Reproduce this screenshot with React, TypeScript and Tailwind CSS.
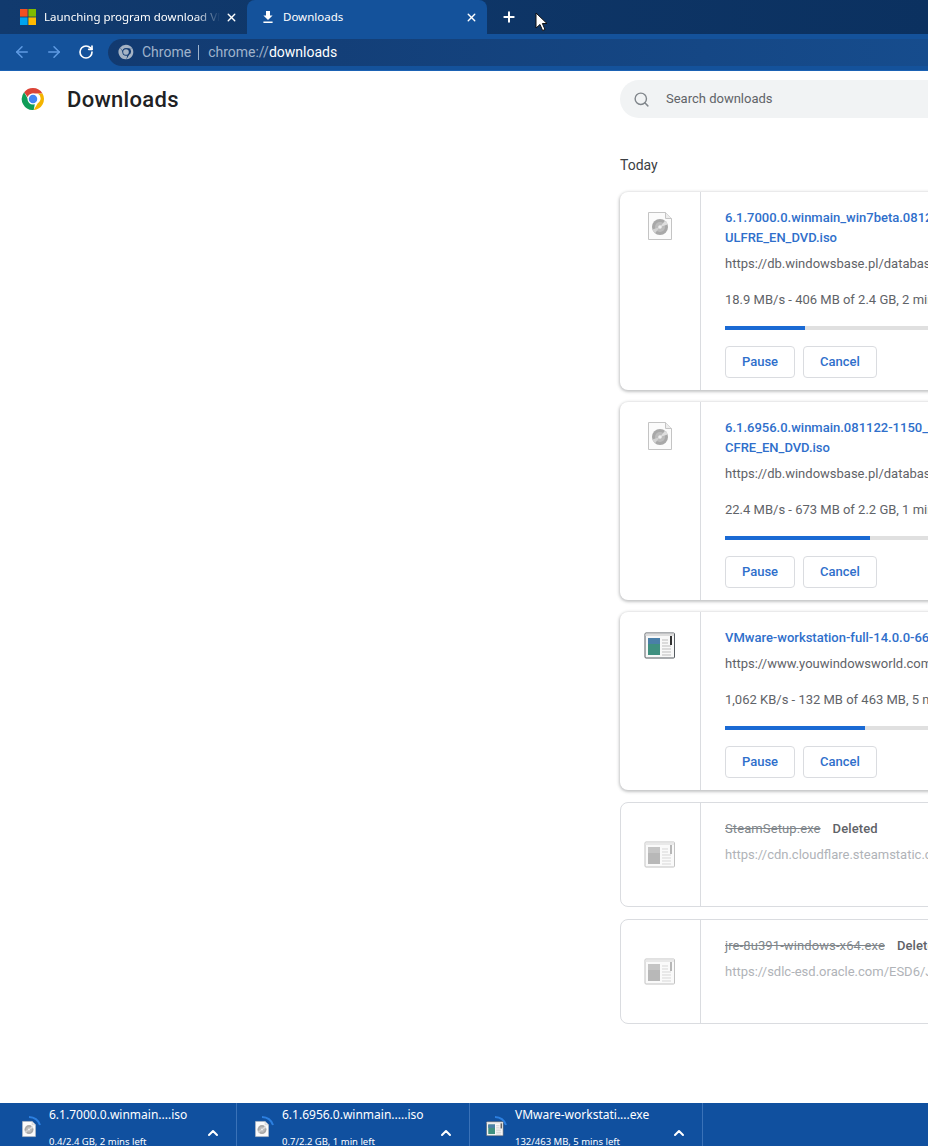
import { ArrowLeft, ArrowRight, ChevronUp, Plus, RotateCw, Search, X } from "lucide-react";

const roboto = "font-['Roboto',sans-serif]";
const ui = "font-['Noto_Sans',sans-serif]";

function ChromeLogo({ size, colors, ring = "#fff" }: { size: number; colors: [string, string, string, string]; ring?: string }) {
  const [red, yellow, green, blue] = colors;
  return (
    <svg width={size} height={size} viewBox="0 0 48 48">
      <path d="M24 2a22 22 0 0 1 19 11H24a11 11 0 0 0-10.4 7.4L6.2 10.6A22 22 0 0 1 24 2z" fill={red} />
      <path d="M43 13a22 22 0 0 1-17.6 33l8-13.6A11 11 0 0 0 33.500 13z" fill={yellow} />
      <path d="M25.400 46A22 22 0 0 1 6.200 10.600l9.500 16.400a11 11 0 0 0 12.200 6.200z" fill={green} />
      <circle cx="24" cy="24" r="11" fill={ring} />
      <circle cx="24" cy="24" r="8.500" fill={blue} />
    </svg>
  );
}

function DiscFile({ size = 32 }: { size?: number }) {
  return (
    <svg width={size} height={size} viewBox="0 0 32 32">
      <path d="M4.500 2.500h17l6 6v21h-23z" fill="#fbfbfb" stroke="#c4c4c4" />
      <path d="M21.500 2.500v6h6" fill="#ececec" stroke="#c4c4c4" />
      <circle cx="16" cy="17" r="8" fill="#a8a8a8" />
      <circle cx="16" cy="17" r="5" fill="#bcbcbc" />
      <path d="M16 17l5-6.200a8 8 0 0 1 2.600 3.600z" fill="#dedede" />
      <path d="M16 17l-5 6.200a8 8 0 0 1-2.600-3.600z" fill="#d2d2d2" />
      <circle cx="16" cy="17" r="1.800" fill="#efefef" />
    </svg>
  );
}

function WindowFile({ size = 32, faded = false }: { size?: number; faded?: boolean }) {
  return (
    <svg width={size} height={size} viewBox="0 0 32 28" opacity={faded ? 0.6 : 1}>
      <rect x="1" y="1" width="29.500" height="25" rx="1" fill="#f8f8f8" stroke={faded ? "#9a9a9a" : "#555b60"} />
      <rect x="1.500" y="1.500" width="28.500" height="2.500" fill="#dcdcdc" />
      <rect x="4" y="6" width="12" height="17" fill={faded ? "#8a8a8a" : "#3f9080"} />
      <rect x="4" y="6" width="12" height="6" fill={faded ? "#a0a0a0" : "#4a7fa8"} />
      <rect x="26" y="4" width="2" height="9" fill={faded ? "#888" : "#333"} />
      <path d="M18 8h6M18 11h6M18 14h9M18 17h9M18 20h9M18 23h9" stroke="#bdbdbd" strokeWidth="1" />
    </svg>
  );
}

function Cursor() {
  return (
    <svg width="14" height="21" viewBox="0 0 14 21" className="ml-[3px] mt-[12px] shrink-0">
      <path d="M2 1v15l4-3.500 2.600 6 2.400-1-2.600-6H13z" fill="#fff" stroke="#111" strokeWidth="1" />
    </svg>
  );
}

const active = [
  {
    title: ["6.1.7000.0.winmain_win7beta.081212-1400", "ULFRE_EN_DVD.iso"],
    url: "https://db.windowsbase.pl/database/windows",
    status: "18.9 MB/s - 406 MB of 2.4 GB, 2 mins left",
    bar: 80,
    icon: "disc",
  },
  {
    title: ["6.1.6956.0.winmain.081122-1150_client", "CFRE_EN_DVD.iso"],
    url: "https://db.windowsbase.pl/database/windows",
    status: "22.4 MB/s - 673 MB of 2.2 GB, 1 min left",
    bar: 145,
    icon: "disc",
  },
  {
    title: ["VMware-workstation-full-14.0.0-6661328.exe"],
    url: "https://www.youwindowsworld.com/downloads",
    status: "1,062 KB/s - 132 MB of 463 MB, 5 mins left",
    bar: 140,
    icon: "window",
  },
];

const deleted = [
  { name: "SteamSetup.exe", url: "https://cdn.cloudflare.steamstatic.com/client" },
  { name: "jre-8u391-windows-x64.exe", url: "https://sdlc-esd.oracle.com/ESD6/JSCDL" },
];

const shelf = [
  { name: "6.1.7000.0.winmain....iso", sub: "0.4/2.4 GB, 2 mins left", icon: "disc" },
  { name: "6.1.6956.0.winmain.....iso", sub: "0.7/2.2 GB, 1 min left", icon: "disc" },
  { name: "VMware-workstati....exe", sub: "132/463 MB, 5 mins left", icon: "window" },
];

export default function App() {
  return (
    <div className={`flex h-screen w-full flex-col overflow-hidden bg-white ${roboto}`}>
      {/* tab strip */}
      <div className="flex h-[34px] shrink-0 bg-gradient-to-r from-[#113a6e] to-[#0b3160]">
        <div className="flex w-[247px] shrink-0 items-center pl-[20px] pr-[9px]">
          <svg width="16" height="16" viewBox="0 0 16 16" className="shrink-0">
            <rect width="7.600" height="7.600" fill="#f25022" />
            <rect x="8.400" width="7.600" height="7.600" fill="#7fba00" />
            <rect y="8.400" width="7.600" height="7.600" fill="#00a4ef" />
            <rect x="8.400" y="8.400" width="7.600" height="7.600" fill="#ffb900" />
          </svg>
          <span className={`ml-[8px] w-[176px] overflow-hidden whitespace-nowrap text-[11.500px] text-white [mask-image:linear-gradient(to_right,#000_86%,transparent)] ${ui}`}>
            Launching program download VMware
          </span>
          <X size={13} strokeWidth={2.5} className="ml-auto text-white" />
        </div>
        <div className="flex w-[240px] shrink-0 items-center rounded-t-[8px] bg-[#14529b] pl-[14px] pr-[9px]">
          <svg width="14" height="14" viewBox="0 0 14 14" className="shrink-0">
            <path d="M5 1h4v4.500h2.600L7 10 2.400 5.500H5zM2.400 11.500h9.200V13H2.400z" fill="#fff" />
          </svg>
          <span className={`ml-[8px] text-[11.500px] text-white ${ui}`}>Downloads</span>
          <X size={13} strokeWidth={2.5} className="ml-auto text-white" />
        </div>
        <div className="flex w-[44px] shrink-0 items-center justify-center">
          <Plus size={16} strokeWidth={3} className="text-white" />
        </div>
        <Cursor />
      </div>

      {/* toolbar */}
      <div className="flex h-[37px] shrink-0 items-center border-b border-[#1b62b4] bg-[#14529b] pl-[13px]">
        <ArrowLeft size={18} className="text-[#5f9be3]" />
        <ArrowRight size={18} className="ml-[14px] text-[#5f9be3]" />
        <RotateCw size={16} strokeWidth={2.5} className="ml-[15px] text-white" />
        <div className="ml-[14px] flex h-[27px] flex-1 items-center rounded-l-full bg-gradient-to-r from-[#123a70] to-[#164c8d] pl-[10px]">
          <ChromeLogo size={16} colors={["#a5b3c4", "#a5b3c4", "#a5b3c4", "#a5b3c4"]} ring="#123a70" />
          <span className="ml-[8px] text-[14px] text-[#9fb3cc]">Chrome</span>
          <div className="ml-[7px] h-[15px] w-px bg-[#9fb3cc]" />
          <span className="ml-[9px] text-[14px] text-[#9fb3cc]">
            chrome://<span className="text-white">downloads</span>
          </span>
        </div>
      </div>

      {/* page */}
      <div className="min-h-0 flex-1 overflow-hidden">
        <div className="flex h-[56px] items-center">
          <div className="flex w-[620px] shrink-0 items-center pl-[21px]">
            <ChromeLogo size={24} colors={["#db4437", "#f4b400", "#0f9d58", "#4285f4"]} />
            <span className="ml-[22px] text-[22px] font-medium tracking-[0.3px] text-[#202124]">Downloads</span>
          </div>
          <div className="flex h-[38px] w-[680px] shrink-0 items-center rounded-full bg-[#f1f3f4] pl-[13px]">
            <Search size={17} className="text-[#80868b]" />
            <span className="ml-[16px] text-[13px] text-[#5f6368]">Search downloads</span>
          </div>
        </div>

        <div className="w-[1300px] pl-[620px]">
          <div className="mt-[28px] h-[20px] text-[14px] leading-[20px] text-[#3c4043]">Today</div>
          <div className="mt-[17px] flex flex-col gap-[12px]">
            {active.map((d) => (
              <div key={d.title[0]} className="flex rounded-[8px] bg-white shadow-[0_1px_3px_1px_rgba(60,64,67,0.3)]">
                <div className="flex w-[81px] shrink-0 justify-center border-r border-[#dadce0] pr-[1px] pt-[18px]">
                  {d.icon === "disc" ? <DiscFile /> : <WindowFile />}
                </div>
                <div className="flex-1 px-[24px] pb-[12px] pt-[16px] text-[13px] leading-[20px]">
                  {d.title.map((line) => (
                    <div key={line} className="whitespace-nowrap font-medium text-[#2f6fcb]">{line}</div>
                  ))}
                  <div className="mt-[6px] whitespace-nowrap text-[#5f6368]">{d.url}</div>
                  <div className="mt-[16px] whitespace-nowrap text-[#5f6368]">{d.status}</div>
                  <div className="mt-[16px] h-[4px] w-[552px] bg-[#e0e0e0]">
                    <div className="h-full bg-[#1a6ad4]" style={{ width: d.bar }} />
                  </div>
                  <div className="mt-[16px] flex gap-[8px]">
                    <div className="flex h-[32px] w-[70px] items-center justify-center rounded-[4px] border border-[#dadce0] font-medium text-[#2f6fcb]">Pause</div>
                    <div className="flex h-[32px] w-[74px] items-center justify-center rounded-[4px] border border-[#dadce0] font-medium text-[#2f6fcb]">Cancel</div>
                  </div>
                </div>
              </div>
            ))}
            {deleted.map((d) => (
              <div key={d.name} className="flex h-[105px] rounded-[8px] border border-[#dadce0] bg-white">
                <div className="flex w-[80px] shrink-0 items-center justify-center border-r border-[#dadce0] pr-[2px]">
                  <WindowFile faded />
                </div>
                <div className="flex-1 pl-[24px] pt-[16px] text-[13px] leading-[20px]">
                  <div className="flex gap-[12px] whitespace-nowrap tracking-[0.1px]">
                    <span className="text-[#80868b] line-through">{d.name}</span>
                    <span className="font-medium text-[#5f6368]">Deleted</span>
                  </div>
                  <div className="mt-[6px] whitespace-nowrap text-[#b0b3b8]">{d.url}</div>
                </div>
              </div>
            ))}
          </div>
        </div>
      </div>

      {/* download shelf */}
      <div className="flex h-[43px] shrink-0 overflow-hidden bg-[#10509f] pl-[4px] text-white">
        {shelf.map((s) => (
          <div key={s.name} className="flex h-full w-[233px] shrink-0 items-start border-r border-[#3a72b8] pl-[12px]">
            <div className="relative mt-[13px] h-[26px] w-[26px] shrink-0">
              <svg width="26" height="26" viewBox="0 0 26 26" className="absolute inset-0">
                <path d="M13 1a12 12 0 0 1 11 8" fill="none" stroke="#2c7fe0" strokeWidth="2" />
              </svg>
              <div className="absolute left-[4px] top-[4px]">
                {s.icon === "disc" ? <DiscFile size={18} /> : <WindowFile size={18} />}
              </div>
            </div>
            <div className={`ml-[7px] mt-[3px] w-[156px] shrink-0 whitespace-nowrap ${ui}`}>
              <div className="text-[12px] leading-[18px]">{s.name}</div>
              <div className="mt-[11px] text-[9.500px] leading-[14px]">{s.sub}</div>
            </div>
            <ChevronUp size={16} strokeWidth={3} className="mt-[22px] shrink-0" />
          </div>
        ))}
      </div>
    </div>
  );
}
